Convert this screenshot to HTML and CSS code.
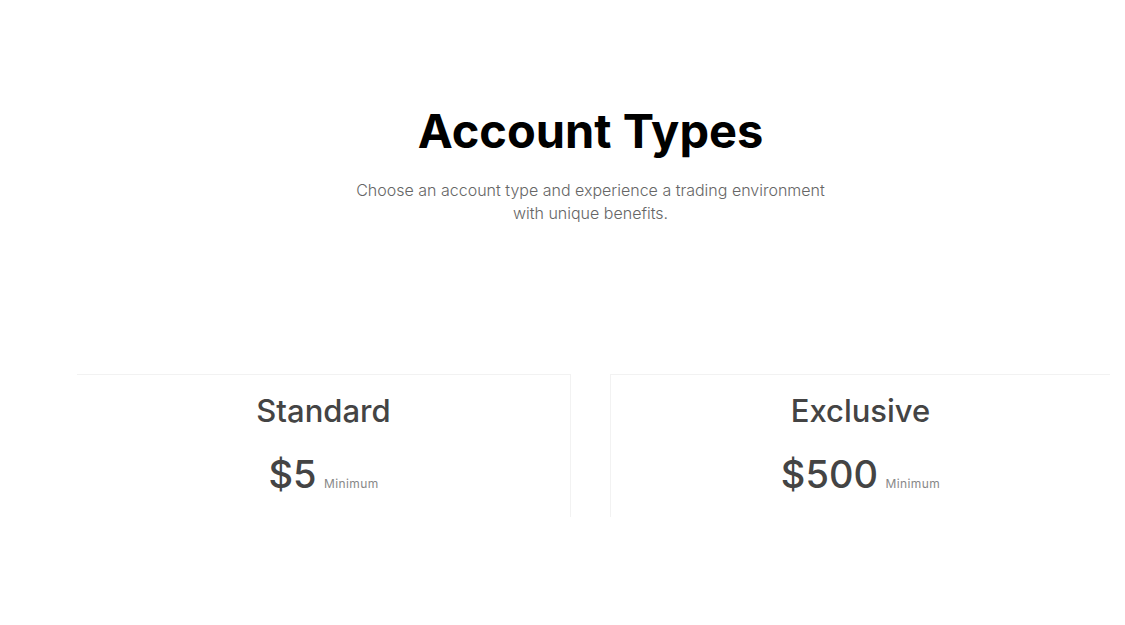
FILE: index.html
```html
<!DOCTYPE html>
<html lang="en">
<head>
<meta charset="UTF-8">
<meta name="viewport" content="width=device-width, initial-scale=1">
<title>Account Types</title>
<link rel="stylesheet" href="styles.css">
</head>
<body>
<section class="accounts">
  <div class="heading">
    <h2>Account Types</h2>
    <p class="intro">Choose an account type and experience a trading environment<br>with unique benefits.</p>
  </div>

  <div class="account-list">
    <div class="account-card standard">
      <h3>Standard</h3>
      <div class="price"><span class="amount">$5</span> <span class="label">Minimum</span></div>
    </div>
    <div class="account-card exclusive">
      <h3>Exclusive</h3>
      <div class="price"><span class="amount">$500</span> <span class="label">Minimum</span></div>
    </div>
  </div>
</section>
</body>
</html>
```

FILE: styles.css
```css
* { box-sizing: border-box; }
body { margin: 0; background: #fff; font-family: Inter, "Noto Sans", sans-serif; color: #444; }
.accounts { padding-top: 101px; }
.heading { padding-left: 56px; text-align: center; }
h2 { margin: 0; font-size: 47px; line-height: 60px; font-weight: 700; color: #000; }
.intro { margin: 18px 0 0; font-size: 16px; line-height: 23px; font-weight: 300; color: #666; }
.account-list { display: flex; gap: 39px; margin-top: 149px; padding-left: 77px; }
.account-card { text-align: center; border-top: 1px solid #f2f2f2; padding: 18px 0 9px; }
.account-card.standard { width: 494px; border-right: 1px solid #f2f2f2; }
.account-card.exclusive { width: 500px; border-left: 1px solid #f2f2f2; }
h3 { margin: 0; font-size: 31px; line-height: 36px; font-weight: 500; color: #444; }
.price { margin-top: 21px; line-height: 48px; }
.amount { font-size: 38px; font-weight: 500; color: #444; }
.label { margin-left: 3px; font-size: 12px; letter-spacing: 0.4px; color: #888; }
```
